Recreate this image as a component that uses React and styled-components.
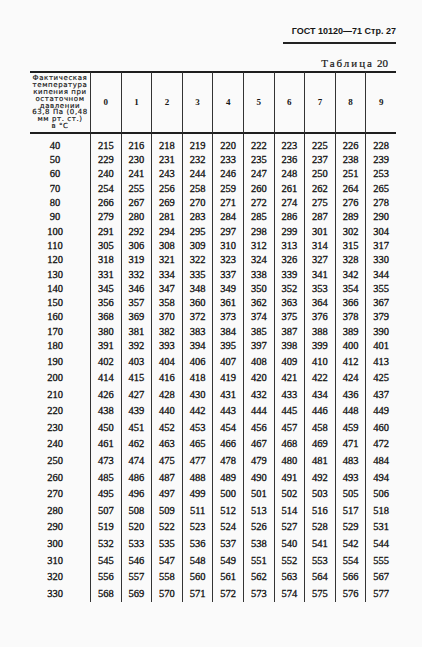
import React from "react";
import styled, { createGlobalStyle } from "styled-components";

const Global = createGlobalStyle`
  html, body { margin: 0; padding: 0; background: #fafafa; }
`;

const Page = styled.div`
  width: 422px;
  height: 647px;
  box-sizing: border-box;
  padding: 26px 26px 0 30px;
  background: #fafafa;
  color: #161616;
  overflow: hidden;
`;

const RunningHead = styled.div`
  display: flex;
  justify-content: flex-end;
`;

const HeadText = styled.span`
  font: bold 9px/10px "Liberation Sans", Arial, sans-serif;
  padding: 0 0 6px 9px;
  border-bottom: 2px solid #222;
  white-space: nowrap;
`;

const Caption = styled.div`
  display: flex;
  justify-content: flex-end;
  align-items: baseline;
  margin: 13px 8px 2px 0;
  font: 11px/12px "Liberation Serif", "Times New Roman", serif;
  -webkit-text-stroke: 0.2px #161616;
`;

const CaptionWord = styled.span`
  letter-spacing: 2px;
  margin-right: 3px;
`;

const Table = styled.table`
  width: 366px;
  table-layout: fixed;
  border-collapse: separate;
  border-spacing: 0;
`;

const Col = styled.col`
  width: ${(p) => p.$w}px;
`;

const HeadRow = styled.tr`
  height: 63px;
`;

const HeadCell = styled.th`
  padding: 0;
  border-top: 2px solid #1e1e1e;
  border-bottom: 2px solid #1e1e1e;
  border-left: ${(p) => (p.$first ? "none" : "1px solid #333")};
  vertical-align: middle;
  text-align: center;
  font: bold 9px/1 "Liberation Serif", "Times New Roman", serif;
`;

const HeadLabel = styled.div`
  font: 7px/6.9px "DejaVu Sans", "Liberation Sans", sans-serif;
  letter-spacing: 0.6px;
  white-space: nowrap;
  text-align: center;
  color: #111;
  -webkit-text-stroke: 0.15px #111;
`;

const Row = styled.tr`
  height: ${(p) => p.$h + (p.$lead || 0)}px;
`;

const Cell = styled.td`
  padding: ${(p) => (p.$lead ? `${p.$lead}px 0 0 0` : "0")};
  padding-right: ${(p) => (p.$label ? "10px" : "0")};
  border-left: ${(p) => (p.$label ? "none" : "1px solid #333")};
  text-align: center;
  vertical-align: middle;
  font: 10.5px/1 "Liberation Serif", "Times New Roman", serif;
  color: #111;
  -webkit-text-stroke: 0.3px #111;
  white-space: nowrap;
`;

const DATA = `40 215 216 218 219 220 222 223 225 226 228
50 229 230 231 232 233 235 236 237 238 239
60 240 241 243 244 246 247 248 250 251 253
70 254 255 256 258 259 260 261 262 264 265
80 266 267 269 270 271 272 274 275 276 278
90 279 280 281 283 284 285 286 287 289 290
100 291 292 294 295 297 298 299 301 302 304
110 305 306 308 309 310 312 313 314 315 317
120 318 319 321 322 323 324 326 327 328 330
130 331 332 334 335 337 338 339 341 342 344
140 345 346 347 348 349 350 352 353 354 355
150 356 357 358 360 361 362 363 364 366 367
160 368 369 370 372 373 374 375 376 378 379
170 380 381 382 383 384 385 387 388 389 390
180 391 392 393 394 395 397 398 399 400 401
190 402 403 404 406 407 408 409 410 412 413
200 414 415 416 418 419 420 421 422 424 425
210 426 427 428 430 431 432 433 434 436 437
220 438 439 440 442 443 444 445 446 448 449
230 450 451 452 453 454 456 457 458 459 460
240 461 462 463 465 466 467 468 469 471 472
250 473 474 475 477 478 479 480 481 483 484
260 485 486 487 488 489 490 491 492 493 494
270 495 496 497 499 500 501 502 503 505 506
280 507 508 509 511 512 513 514 516 517 518
290 519 520 522 523 524 526 527 528 529 531
300 532 533 535 536 537 538 540 541 542 544
310 545 546 547 548 549 551 552 553 554 555
320 556 557 558 560 561 562 563 564 566 567
330 568 569 570 571 572 573 574 575 576 577`
  .split("\n")
  .map((l) => l.trim().split(/\s+/));

const LABEL_LINES = [
  "Фактическая",
  "температура",
  "кипения при",
  "остаточном",
  "давлении",
  "63,8 Па (0,48",
  "мм рт. ст.)",
  "в °С",
];

const DIGITS = ["0", "1", "2", "3", "4", "5", "6", "7", "8", "9"];

export default function App() {
  return (
    <>
      <Global />
      <Page>
        <RunningHead>
          <HeadText>ГОСТ 10120—71 Стр. 27</HeadText>
        </RunningHead>
        <Caption>
          <CaptionWord>Таблица</CaptionWord>
          <span>20</span>
        </Caption>
        <Table>
          <colgroup>
            <Col $w={60} />
            {DIGITS.map((d) => (
              <Col key={d} $w={30.6} />
            ))}
          </colgroup>
          <thead>
            <HeadRow>
              <HeadCell $first>
                <HeadLabel>
                  {LABEL_LINES.map((l, i) => (
                    <div key={i}>{l}</div>
                  ))}
                </HeadLabel>
              </HeadCell>
              {DIGITS.map((d) => (
                <HeadCell key={d}>{d}</HeadCell>
              ))}
            </HeadRow>
          </thead>
          <tbody>
            {DATA.map((row, i) => {
              const h = i < 15 ? 14.3 : 16.6;
              const lead = i === 0 ? 5 : 0;
              return (
                <Row key={row[0]} $h={h} $lead={lead}>
                  {row.map((v, j) => (
                    <Cell key={j} $label={j === 0} $lead={lead}>
                      {v}
                    </Cell>
                  ))}
                </Row>
              );
            })}
          </tbody>
        </Table>
      </Page>
    </>
  );
}
